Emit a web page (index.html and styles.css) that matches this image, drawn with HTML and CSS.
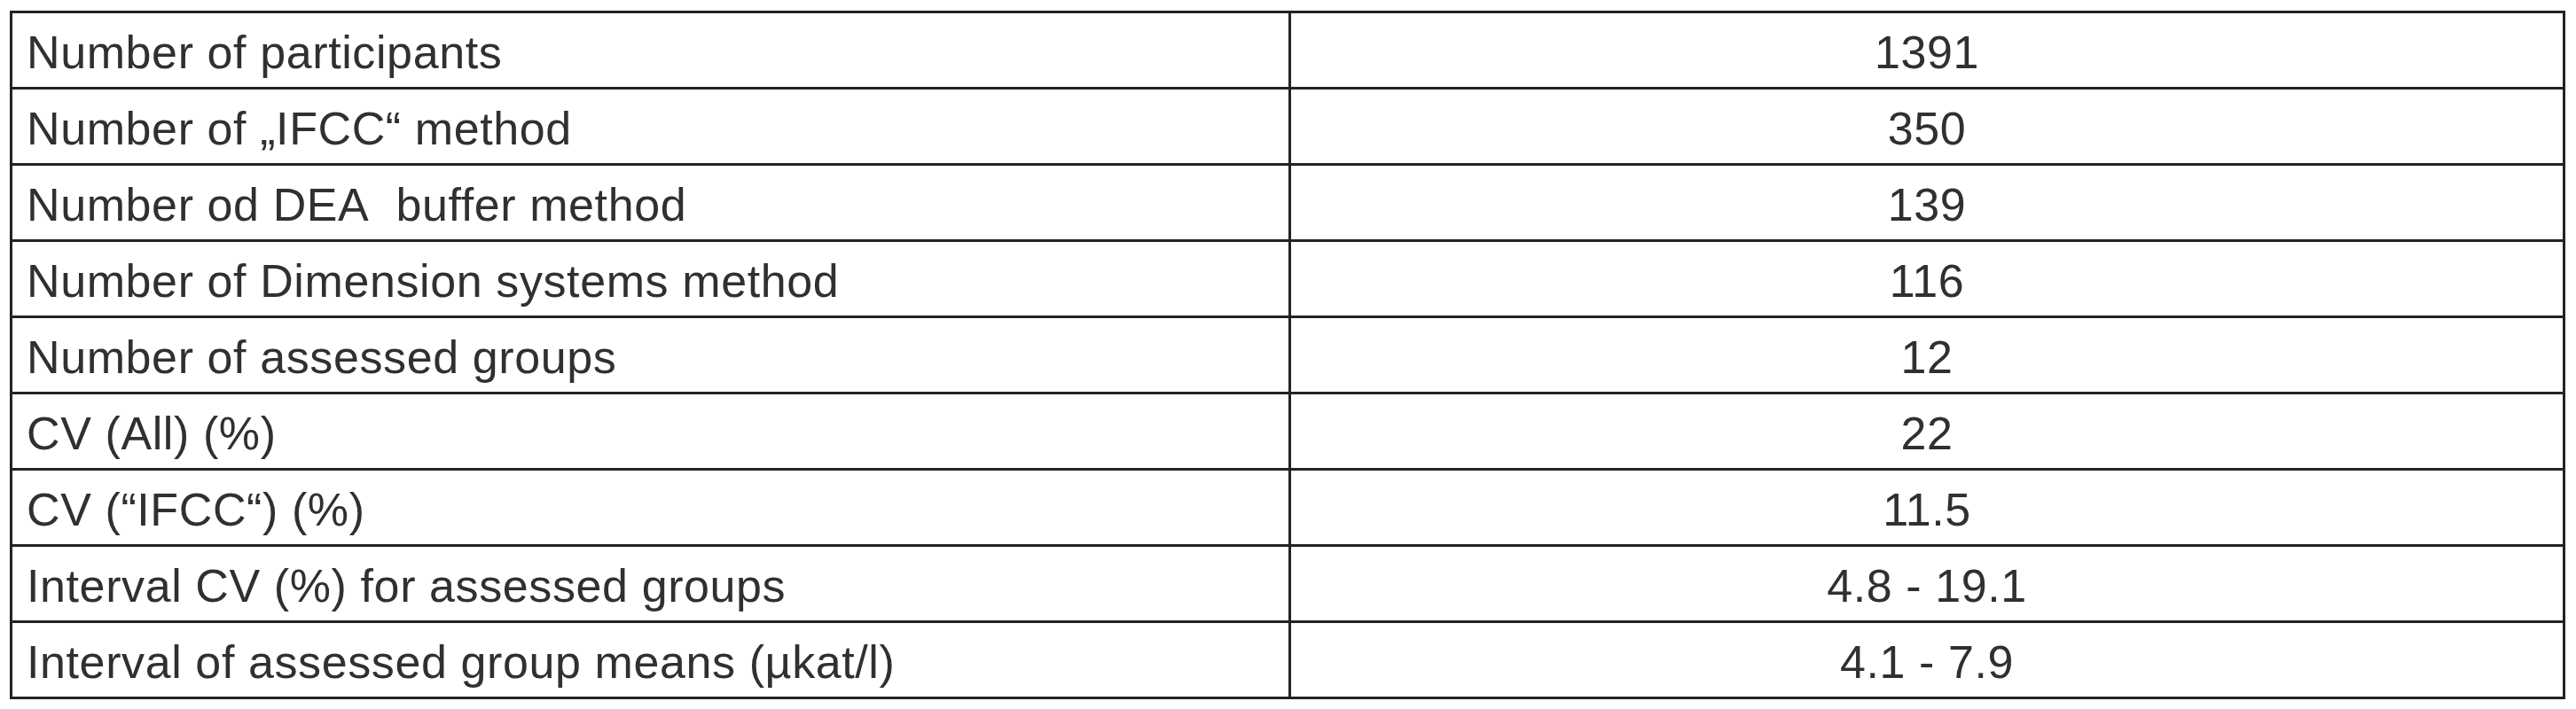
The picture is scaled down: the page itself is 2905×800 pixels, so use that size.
FILE: index.html
```html
<!DOCTYPE html>
<html lang="en">
<head>
<meta charset="utf-8">
<title>Results summary</title>
<link rel="stylesheet" href="styles.css">
</head>
<body>
<table class="summary">
  <tbody>
    <tr><td class="label">Number of participants</td><td class="value">1391</td></tr>
    <tr><td class="label">Number of „IFCC“ method</td><td class="value">350</td></tr>
    <tr><td class="label">Number od DEA&nbsp; buffer method</td><td class="value">139</td></tr>
    <tr><td class="label">Number of Dimension systems method</td><td class="value">116</td></tr>
    <tr><td class="label">Number of assessed groups</td><td class="value">12</td></tr>
    <tr><td class="label">CV (All) (%)</td><td class="value">22</td></tr>
    <tr><td class="label">CV (“IFCC“) (%)</td><td class="value">11.5</td></tr>
    <tr><td class="label">Interval CV (%) for assessed groups</td><td class="value">4.8 - 19.1</td></tr>
    <tr><td class="label">Interval of assessed group means (µkat/l)</td><td class="value">4.1 - 7.9</td></tr>
  </tbody>
</table>
</body>
</html>
```

FILE: styles.css
```css
html, body {
  margin: 0;
  padding: 0;
  background: #ffffff;
}

body {
  padding: 12px 0 0 11px;
  font-family: "Liberation Sans", Arial, sans-serif;
  color: #303030;
}

.summary {
  border-collapse: collapse;
  width: 2882px;
  table-layout: fixed;
}

.summary td {
  border: 3px solid #232323;
  height: 86px;
  padding: 4px 16px 0 16px;
  font-size: 52px;
  line-height: 1;
  letter-spacing: 0.6px;
  vertical-align: middle;
  box-sizing: border-box;
}

.summary .label {
  width: 1442px;
  text-align: left;
}

.summary .value {
  text-align: center;
}
```
